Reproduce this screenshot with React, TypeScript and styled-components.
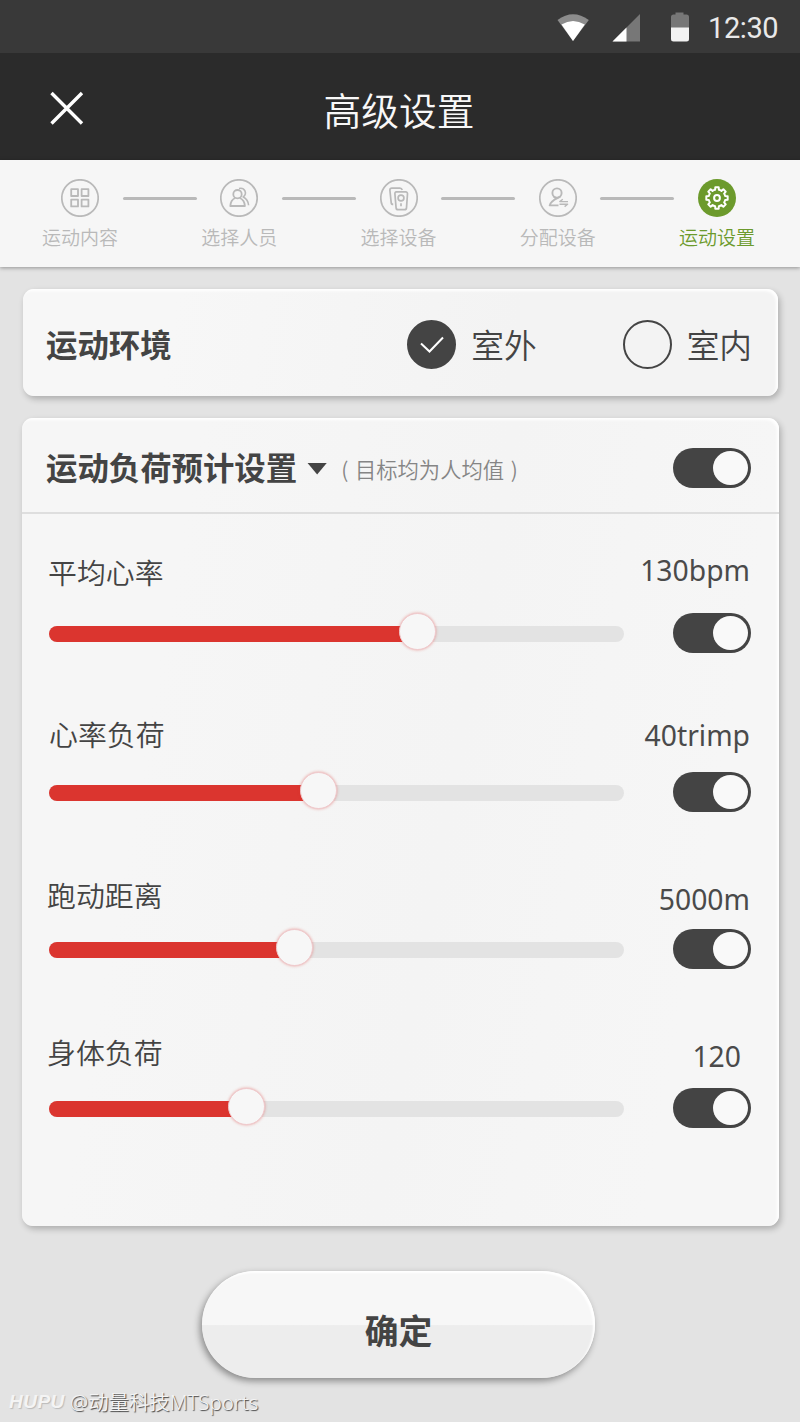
import React from "react";
import styled, { createGlobalStyle } from "styled-components";

const GlobalStyle = createGlobalStyle`
  *, *::before, *::after { box-sizing: border-box; }
  body {
    margin: 0;
    background: #e3e3e3;
    color: #444;
    font-family: "Noto Sans", "Noto Sans CJK SC", sans-serif;
  }
`;

const cjk = `"Noto Sans CJK SC", sans-serif`;

const Screen = styled.div`
  position: relative;
  width: 800px;
  height: 1422px;
  overflow: hidden;
  display: flex;
  flex-direction: column;
  background: #e3e3e3;
`;

const StatusBar = styled.div`
  flex: none;
  height: 53px;
  padding-right: 22px;
  display: flex;
  justify-content: flex-end;
  align-items: center;
  background: #393939;
`;

const StatusIcons = styled.svg`
  display: block;
  width: 140px;
  height: 53px;
  margin-right: 12px;
`;

const Clock = styled.span`
  width: 70px;
  text-align: right;
  white-space: nowrap;
  font: 400 29px/53px Roboto, sans-serif;
  letter-spacing: -0.4px;
  color: #e9e9e9;
  padding-top: 4px;
`;

const TitleBar = styled.header`
  flex: none;
  height: 107px;
  padding: 0 50px;
  display: grid;
  grid-template-columns: 34px 1fr 34px;
  align-items: center;
  background: #2b2b2b;
`;

const Title = styled.h1`
  margin: 0;
  padding: 4px 2px 0 0;
  text-align: center;
  font: 350 37.7px/50px ${cjk};
  color: #f8f8f8;
`;

const CloseButton = styled.button`
  border: 0;
  padding: 0;
  background: none;
  width: 34px;
  height: 34px;
  margin-top: 3px;
  svg { display: block; }
`;

const Stepper = styled.nav`
  flex: none;
  height: 107px;
  padding: 19px 45px 0 42px;
  display: flex;
  justify-content: space-between;
  background: #f6f6f6;
  box-shadow: 0 1px 4px rgba(0, 0, 0, 0.36);
`;

const Step = styled.div<{ $active?: boolean }>`
  width: 76px;
  display: flex;
  flex-direction: column;
  align-items: center;
  color: ${(p) => (p.$active ? "#6c9a2c" : "#b9b9b9")};
  svg { display: block; }
`;

const StepLabel = styled.span`
  font: 350 19px/28px ${cjk};
  white-space: nowrap;
  margin-top: 6px;
`;

const StepLine = styled.div`
  width: 74px;
  height: 3px;
  margin-top: 18px;
  border-radius: 2px;
  background: #b9b9b9;
`;

const cardShadow = `inset -2px 2px 3px #fff, 2px 3px 6px rgba(0, 0, 0, 0.24)`;

const EnvironmentCard = styled.section`
  flex: none;
  height: 107px;
  margin: 22px 22px 0 23px;
  padding: 0 26px 0 23px;
  display: flex;
  align-items: center;
  border-radius: 11px;
  background: linear-gradient(100deg, #f7f7f7 20%, #f3f3f3 65%);
  box-shadow: ${cardShadow};
`;

const Heading = styled.h2`
  margin: 0 0 2px;
  font: 700 31.4px/46px ${cjk};
  color: #444;
  white-space: nowrap;
`;

const EnvironmentHeading = styled(Heading)`
  padding-top: 4px;
`;

const Choices = styled.div`
  margin-left: auto;
  display: flex;
  gap: 86px;
`;

const Choice = styled.label`
  display: flex;
  align-items: center;
  gap: 15px;
  font: 350 32.7px/49px ${cjk};
  white-space: nowrap;
  color: #444;
`;

const Radio = styled.span<{ $checked?: boolean }>`
  width: 49px;
  height: 49px;
  margin-top: 3px;
  display: grid;
  place-items: center;
  border-radius: 50%;
  border: 2px solid #444;
  background: ${(p) => (p.$checked ? "#444" : "transparent")};
`;

const ChoiceText = styled.span`
  margin-top: 1px;
`;

const LoadCard = styled.section`
  flex: none;
  height: 808px;
  margin: 22px 21px 0 22px;
  border-radius: 11px;
  background: linear-gradient(100deg, #f6f6f6 20%, #f4f4f4 55%, #f6f6f6 85%);
  box-shadow: ${cardShadow};
`;

const LoadHeader = styled.div`
  height: 96px;
  padding: 5px 28px 0 24px;
  display: flex;
  align-items: center;
  border-bottom: 2px solid #dedede;
`;

const Caret = styled.span`
  width: 20px;
  height: 12px;
  margin: 2px 0 0 10px;
  background: #444;
  clip-path: polygon(0 0, 100% 0, 50% 100%);
`;

const Hint = styled.span`
  margin-left: 14px;
  padding-top: 2px;
  font: 350 21.3px/30px ${cjk};
  word-spacing: 2px;
  white-space: pre;
  color: #858585;
`;

const Switch = styled.button`
  flex: none;
  width: 78px;
  height: 40px;
  margin-left: auto;
  padding: 3px;
  border: 0;
  border-radius: 20px;
  display: flex;
  justify-content: flex-end;
  background: #444;
  &::after {
    content: "";
    width: 35px;
    height: 34px;
    border-radius: 50%;
    background: #f9f9f9;
  }
`;

const Metrics = styled.div`
  display: flex;
  flex-direction: column;
  padding: 29px 28px 0 27px;
`;

const Metric = styled.div<{ $height: number }>`
  height: ${(p) => p.$height}px;
`;

const MetricHead = styled.div`
  height: 70px;
  display: flex;
  justify-content: space-between;
`;

const MetricName = styled.span<{ $top: number; $shift: number }>`
  padding-top: ${(p) => p.$top}px;
  margin-left: ${(p) => p.$shift}px;
  font: 350 28.9px/40px ${cjk};
`;

const MetricValue = styled.span<{ $top: number; $right: number }>`
  padding: ${(p) => `${p.$top}px ${p.$right}px 0 0`};
  font: 400 28.3px/40px "Noto Sans", sans-serif;
  color: #4a4a4a;
`;

const MetricControl = styled.div`
  height: 40px;
  display: flex;
  align-items: center;
`;

const Track = styled.div`
  position: relative;
  width: 575px;
  height: 16px;
  margin-top: 1px;
  border-radius: 8px;
  background: #e3e3e3;
`;

const Fill = styled.div`
  height: 16px;
  border-radius: 8px 0 0 8px;
  background: #db352f;
`;

const Knob = styled.div`
  position: absolute;
  top: -12.5px;
  width: 37px;
  height: 37px;
  margin-left: -18.5px;
  border-radius: 50%;
  border: 1px solid #efc9cc;
  background: #f7f7f7;
  box-shadow: 0 0 3px rgba(219, 53, 47, 0.45);
`;

const ConfirmButton = styled.button`
  flex: none;
  align-self: center;
  width: 393px;
  height: 107px;
  margin: 45px 3px 0 0;
  padding: 11px 0 0;
  border: 0;
  border-radius: 54px;
  font: 700 33.8px/50px ${cjk};
  color: #444;
  background: linear-gradient(#f7f7f7 50%, #ededed 51%);
  box-shadow: inset -2px 2px 2px #fff, -2px 3px 7px rgba(0, 0, 0, 0.4);
`;

const Watermark = styled.div`
  position: absolute;
  left: 9px;
  bottom: 5px;
  display: flex;
  align-items: center;
  gap: 5px;
  font: 350 20.4px/30px "Noto Sans", ${cjk};
  white-space: nowrap;
  color: #f4f4f4;
  text-shadow: 1px 1px 1px #444;
`;

const Brand = styled.b`
  width: 56px;
  font: italic 700 19px/30px "Liberation Sans", sans-serif;
  letter-spacing: 0.5px;
  text-shadow: 1px 1px 1px #bbb;
`;

const glyphs: Record<string, React.ReactNode> = {
  grid: (
    <g strokeWidth="1.8">
      <rect x="11.2" y="11.2" width="6.8" height="6.8" />
      <rect x="21.6" y="11.2" width="6.8" height="6.8" />
      <rect x="11.2" y="21.6" width="6.8" height="6.8" />
      <rect x="21.6" y="21.6" width="6.8" height="6.8" />
    </g>
  ),
  people: (
    <g strokeWidth="1.8">
      <circle cx="18.5" cy="16.2" r="4.2" />
      <path d="M16.200 20c-3 1.300-4.700 3.900-4.900 8h14.600c-.2-4.100-2-6.700-5.200-8" />
      <path d="M20 10.500c5.800-1.400 8.600 5 4.200 8.500 3.300 1.500 5 4 5.400 8.300" strokeWidth="1.600" />
    </g>
  ),
  devices: (
    <g strokeWidth="1.7">
      <path d="M14.200 26.400c-1.200 0-1.900-.6-2-1.800l-1.300-12.300c-.1-1.400.6-2.200 2-2.200h8c1.300 0 2 .6 2.300 1.900" />
      <path d="M17.300 13.900h9.400c1.200 0 1.900.8 1.800 2l-1 14c-.1 1.200-.8 1.800-2 1.800h-6.400c-1.200 0-1.900-.6-2-1.800l-1.200-14c-.1-1.200.4-2 1.400-2z" />
      <circle cx="22" cy="20" r="2.900" />
      <path d="M22 25.300v3" />
    </g>
  ),
  assign: (
    <g strokeWidth="1.9">
      <circle cx="19" cy="15" r="4.600" />
      <path d="M22.300 18.400c-1.500 1.800-9.300 3-10.600 9h8.800M15.700 18.500l2 1.600" />
      <path d="M30 23.600h-8.200l3-2.300M21.500 26.200h8.100l-3 2.400" strokeWidth="1.400" />
    </g>
  ),
};

const teeth = 8;
const gearPath = Array.from({ length: teeth }, (_, i) => {
  const at = (deg: number, r: number) => {
    const a = ((i * 360) / teeth + deg - 90) * (Math.PI / 180);
    return `${(20 + r * Math.cos(a)).toFixed(2)} ${(20 + r * Math.sin(a)).toFixed(2)}`;
  };
  return `${i ? "L" : "M"}${at(-13, 8.4)}L${at(-9, 10.8)}L${at(9, 10.8)}L${at(13, 8.4)}A8.4 8.4 0 0 1 ${at(32, 8.4)}`;
}).join("") + "Z";

function StepIcon({ name }: { name: string }) {
  if (name === "gear") {
    return (
      <svg width="38" height="38" viewBox="1 1 38 38" fill="none" stroke="#fff" strokeLinejoin="round">
        <circle cx="20" cy="20" r="19" fill="#6c9a2c" stroke="none" />
        <path d={gearPath} strokeWidth="2" />
        <circle cx="20" cy="20" r="2.900" strokeWidth="2" />
      </svg>
    );
  }
  return (
    <svg width="38" height="38" viewBox="1 1 38 38" fill="none" stroke="currentColor" strokeLinejoin="round">
      <circle cx="20" cy="20" r="18.200" strokeWidth="1.700" />
      {glyphs[name]}
    </svg>
  );
}

const steps = [
  { icon: "grid", label: "运动内容" },
  { icon: "people", label: "选择人员" },
  { icon: "devices", label: "选择设备" },
  { icon: "assign", label: "分配设备" },
  { icon: "gear", label: "运动设置" },
];

const metrics = [
  { name: "平均心率", value: "130bpm", position: 368, height: 159, nameTop: 8, nameShift: -1, valueTop: 7, valueRight: 1 },
  { name: "心率负荷", value: "40trimp", position: 269, height: 157, nameTop: 11, nameShift: 0, valueTop: 13, valueRight: 1 },
  { name: "跑动距离", value: "5000m", position: 245.5, height: 159, nameTop: 15, nameShift: -2, valueTop: 20, valueRight: 1 },
  { name: "身体负荷", value: "120", position: 197, height: 110, nameTop: 13, nameShift: -2, valueTop: 18, valueRight: 10 },
];

export default function App() {
  return (
    <Screen>
      <GlobalStyle />
      <StatusBar>
        <StatusIcons viewBox="556 0 140 53">
          <path d="M557.500 20Q573 8.500 588.800 20L573 41z" fill="#8c8c8c" />
          <path d="M561.500 24.500Q573 17.500 584.800 24.500L573 41z" fill="#fff" />
          <path d="M640 14v27.500h-27.500z" fill="#777" />
          <path d="M626.500 27.500v14h-14z" fill="#fff" />
          <path d="M675.500 12.500h8v2h3q2.500 0 2.500 2.500v11h-18V17q0-2.500 2.500-2.500h2z" fill="#777" />
          <path d="M671 27.500h18V39q0 2.500-2.500 2.500h-13q-2.500 0-2.500-2.500z" fill="#f2f2f2" />
        </StatusIcons>
        <Clock>12:30</Clock>
      </StatusBar>
      <TitleBar>
        <CloseButton aria-label="关闭">
          <svg width="34" height="34" viewBox="0 0 34 34" stroke="#fff" strokeWidth="3.400" fill="none">
            <path d="M1.500 2l30.500 30.500M32 2L1.500 32.500" />
          </svg>
        </CloseButton>
        <Title>高级设置</Title>
      </TitleBar>
      <Stepper>
        {steps.map((s, i) => (
          <React.Fragment key={s.icon}>
            {i > 0 && <StepLine />}
            <Step $active={s.icon === "gear"}>
              <StepIcon name={s.icon} />
              <StepLabel>{s.label}</StepLabel>
            </Step>
          </React.Fragment>
        ))}
      </Stepper>
      <EnvironmentCard>
        <EnvironmentHeading>运动环境</EnvironmentHeading>
        <Choices>
          <Choice>
            <Radio $checked>
              <svg width="26" height="20" viewBox="0 0 26 20" fill="none" stroke="#fff" strokeWidth="2">
                <path d="M2 9.500l8.500 8L24 3.500" />
              </svg>
            </Radio>
            <ChoiceText>室外</ChoiceText>
          </Choice>
          <Choice>
            <Radio />
            <ChoiceText>室内</ChoiceText>
          </Choice>
        </Choices>
      </EnvironmentCard>
      <LoadCard>
        <LoadHeader>
          <Heading>运动负荷预计设置</Heading>
          <Caret />
          <Hint>( 目标均为人均值 )</Hint>
          <Switch aria-label="运动负荷预计设置" />
        </LoadHeader>
        <Metrics>
          {metrics.map((m) => (
            <Metric key={m.name} $height={m.height}>
              <MetricHead>
                <MetricName $top={m.nameTop} $shift={m.nameShift}>{m.name}</MetricName>
                <MetricValue $top={m.valueTop} $right={m.valueRight}>{m.value}</MetricValue>
              </MetricHead>
              <MetricControl>
                <Track>
                  <Fill style={{ width: m.position }} />
                  <Knob style={{ left: m.position }} />
                </Track>
                <Switch aria-label={m.name} />
              </MetricControl>
            </Metric>
          ))}
        </Metrics>
      </LoadCard>
      <ConfirmButton>确定</ConfirmButton>
      <Watermark>
        <Brand>HUPU</Brand>
        <span>@动量科技MTSports</span>
      </Watermark>
    </Screen>
  );
}
